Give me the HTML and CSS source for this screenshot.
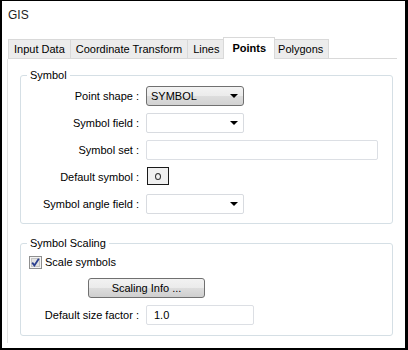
FILE: index.html
```html
<!DOCTYPE html>
<html lang="en">
<head>
<meta charset="UTF-8">
<meta name="viewport" content="width=device-width, initial-scale=1.0">
<title>GIS</title>
<link rel="stylesheet" href="styles.css">
</head>
<body>
<div class="window">
    <div class="title">GIS</div>

    <div class="tabs">
        <span class="tab">Input Data</span>
        <span class="tab">Coordinate Transform</span>
        <span class="tab">Lines</span>
        <span class="tab active">Points</span>
        <span class="tab">Polygons</span>
    </div>

    <div class="panel">
        <div class="group">
            <div class="group-title">Symbol</div>
            <div class="form-grid symbol-grid">
                <label>Point shape :</label>
                <div class="combo combo-list">SYMBOL<i class="arrow"></i></div>

                <label>Symbol field :</label>
                <div class="combo"><i class="arrow"></i></div>

                <label>Symbol set :</label>
                <div class="field field-wide"></div>

                <label>Default symbol :</label>
                <div class="symbol-btn"><span class="ring"></span></div>

                <label>Symbol angle field :</label>
                <div class="combo"><i class="arrow"></i></div>
            </div>
        </div>

        <div class="group scaling">
            <div class="group-title">Symbol Scaling</div>
            <div class="check-row">
                <svg class="checkbox" width="13" height="13" viewBox="0 0 13 13">
                    <rect x="0.5" y="0.5" width="12" height="12" fill="#f4f4f4" stroke="#8f8f8f"/>
                    <rect x="2.5" y="2.5" width="8" height="8" fill="#e2e2e2" stroke="#c4c4c4"/>
                    <path d="M3.2 6.6 L5.4 9.4 L9.8 2.8" fill="none" stroke="#2a3f8f" stroke-width="1.8"/>
                </svg>
                <span>Scale symbols</span>
            </div>
            <div class="button">Scaling Info ...</div>
            <div class="form-grid size-grid">
                <label>Default size factor :</label>
                <div class="field field-size">1.0</div>
            </div>
        </div>
    </div>
</div>
</body>
</html>
```

FILE: styles.css
```css
body {
    margin: 0;
    font-family: "Liberation Sans", Arial, sans-serif;
    font-size: 11px;
    color: #000;
    background-color: #fff;
}
.window {
    width: 408px;
    height: 350px;
    box-sizing: border-box;
    border: solid #000;
    border-width: 1px 3px 2px 2px;
    display: flex;
    flex-direction: column;
}
.title {
    padding: 7px 0 0 6px;
    line-height: 14px;
    font-size: 12px;
    color: #1e1e1e;
}
.tabs {
    display: flex;
    align-items: flex-end;
    height: 21px;
    margin: 15px 8px 0 6px;
    border-bottom: 1px solid #d9d9d9;
}
.tab {
    height: 18px;
    line-height: 18px;
    padding: 0 5px;
    border: 1px solid #d9d9d9;
    border-bottom: none;
    border-left: none;
    background-color: #ececec;
    white-space: nowrap;
}
.tab:first-child {
    border-left: 1px solid #d9d9d9;
}
.tab.active {
    height: 21px;
    line-height: 20px;
    margin: 0 -2px -1px -2px;
    padding: 0 8px;
    border-left: 1px solid #d9d9d9;
    background-color: #fff;
    font-weight: bold;
    position: relative;
}
.tab.active + .tab {
    border-left: none;
}
.panel {
    flex: 1;
    margin: 0 8px 5px 5px;
    padding: 16px 4px 0 12px;
    border-left: 1px solid #e3e3e3;
}
.group {
    border: 1px solid #d5dfe5;
    border-radius: 3px;
}
.group.scaling {
    margin-top: 19px;
    padding-bottom: 10px;
}
.group-title {
    width: max-content;
    margin: -8px 0 0 6px;
    padding: 0 3px;
    line-height: 14px;
    background-color: #fff;
}
.form-grid {
    display: grid;
    grid-template-columns: 118px auto;
    grid-auto-rows: 20px;
    column-gap: 7px;
    row-gap: 7px;
    justify-items: start;
}
.form-grid label {
    justify-self: end;
    line-height: 20px;
    white-space: nowrap;
}
.symbol-grid {
    padding: 4px 0 9px;
}
.size-grid {
    margin-top: 7px;
}
.combo {
    width: 98px;
    height: 20px;
    box-sizing: border-box;
    display: flex;
    align-items: center;
    padding: 0 5px 0 4px;
    border: 1px solid #d8dbe0;
    border-radius: 2px;
    background-color: #fff;
}
.combo-list {
    border-color: #707070;
    border-radius: 3px;
    background: linear-gradient(#f3f3f3, #ebebeb 50%, #dddddd 50%, #d2d2d2);
}
.arrow {
    margin-left: auto;
    width: 0;
    height: 0;
    border-left: 4px solid transparent;
    border-right: 4px solid transparent;
    border-top: 4px solid #000;
}
.field {
    height: 20px;
    box-sizing: border-box;
    padding: 0 7px;
    line-height: 18px;
    border: 1px solid #dcdfe4;
    border-radius: 2px;
}
.field-wide {
    width: 232px;
}
.field-size {
    width: 108px;
}
.symbol-btn {
    width: 22px;
    height: 18px;
    box-sizing: border-box;
    margin-left: 1px;
    border: 1px solid #1a1a1a;
    background-color: #f0f0f0;
    display: flex;
    align-items: center;
    justify-content: center;
}
.ring {
    width: 4px;
    height: 5px;
    border: 1px solid #333;
    border-radius: 50%;
}
.check-row {
    display: flex;
    align-items: center;
    gap: 3px;
    height: 14px;
    margin: 5px 0 0 8px;
}
.button {
    width: 117px;
    height: 20px;
    box-sizing: border-box;
    margin: 9px 0 0 67px;
    line-height: 18px;
    text-align: center;
    border: 1px solid #707070;
    border-radius: 3px;
    background: linear-gradient(#f2f2f2, #ebebeb 50%, #dddddd 50%, #cfcfcf);
}
```
